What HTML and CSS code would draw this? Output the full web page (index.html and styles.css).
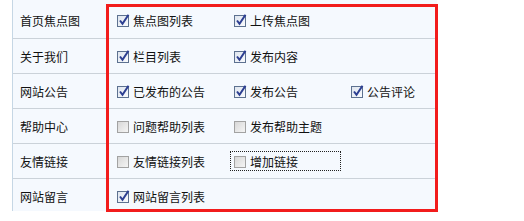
FILE: index.html
```html
<!DOCTYPE html>
<html>
<head>
<meta charset="utf-8">
<link rel="stylesheet" href="styles.css">
</head>
<body>
<svg class="defs" width="0" height="0">
  <defs>
    <linearGradient id="gc" x1="0" y1="0" x2="1" y2="1">
      <stop offset="0" stop-color="#dde4ee"/>
      <stop offset="1" stop-color="#fbfcfe"/>
    </linearGradient>
    <linearGradient id="gu" x1="0" y1="0" x2="1" y2="1">
      <stop offset="0" stop-color="#d6d6d6"/>
      <stop offset="1" stop-color="#f6f6f6"/>
    </linearGradient>
    <symbol id="on" viewBox="0 0 13 13">
      <rect x="0.5" y="1.5" width="11" height="11" fill="url(#gc)" stroke="#5d7190"/>
      <path d="M3 6.5 L5.5 9.8 L11.5 0.8" fill="none" stroke="#2d3f92" stroke-width="2"/>
    </symbol>
    <symbol id="off" viewBox="0 0 13 13">
      <rect x="0.5" y="1.5" width="11" height="11" fill="url(#gu)" stroke="#a2a2a2"/>
    </symbol>
  </defs>
</svg>
<div class="page">
  <div class="table">
    <div class="row first">
      <div class="label">首页焦点图</div>
      <div class="items">
        <span class="item"><svg class="cb"><use href="#on"/></svg>焦点图列表</span>
        <span class="item"><svg class="cb"><use href="#on"/></svg>上传焦点图</span>
      </div>
    </div>
    <div class="row">
      <div class="label">关于我们</div>
      <div class="items">
        <span class="item"><svg class="cb"><use href="#on"/></svg>栏目列表</span>
        <span class="item"><svg class="cb"><use href="#on"/></svg>发布内容</span>
      </div>
    </div>
    <div class="row">
      <div class="label">网站公告</div>
      <div class="items">
        <span class="item"><svg class="cb"><use href="#on"/></svg>已发布的公告</span>
        <span class="item"><svg class="cb"><use href="#on"/></svg>发布公告</span>
        <span class="item"><svg class="cb"><use href="#on"/></svg>公告评论</span>
      </div>
    </div>
    <div class="row">
      <div class="label">帮助中心</div>
      <div class="items">
        <span class="item"><svg class="cb"><use href="#off"/></svg>问题帮助列表</span>
        <span class="item"><svg class="cb"><use href="#off"/></svg>发布帮助主题</span>
      </div>
    </div>
    <div class="row">
      <div class="label">友情链接</div>
      <div class="items">
        <span class="item"><svg class="cb"><use href="#off"/></svg>友情链接列表</span>
        <span class="item focus"><svg class="cb"><use href="#off"/></svg>增加链接</span>
      </div>
    </div>
    <div class="row">
      <div class="label">网站留言</div>
      <div class="items">
        <span class="item"><svg class="cb"><use href="#on"/></svg>网站留言列表</span>
      </div>
    </div>
  </div>
  <div class="mark"></div>
</div>
</body>
</html>
```
FILE: styles.css
```css
html, body {
  margin: 0;
  padding: 0;
  background: #fff;
}
.defs {
  position: absolute;
  width: 0;
  height: 0;
}
.page {
  position: relative;
  width: 524px;
  height: 221px;
  padding-left: 12px;
  box-sizing: border-box;
  font-family: "Noto Sans CJK SC", "Noto Sans", sans-serif;
  font-size: 12px;
  color: #111;
}
.table {
  width: 424px;
  height: 211px;
  overflow: hidden;
  border-left: 1px solid #c6d7e5;
  background: #f5f9fe;
}
.row {
  display: flex;
  align-items: center;
  height: 34px;
  border-bottom: 1px solid #cbd2d9;
}
.row.first {
  height: 35px;
  padding-top: 3px;
}
.label {
  width: 100px;
  padding-left: 7px;
  box-sizing: border-box;
  flex: none;
}
.items {
  display: flex;
  align-items: center;
}
.item {
  display: flex;
  align-items: center;
  width: 111px;
  height: 20px;
  box-sizing: border-box;
  padding-left: 3px;
  margin-right: 6px;
  border: 1px solid transparent;
  white-space: nowrap;
}
.item.focus {
  border: 1px dotted #222;
}
.cb {
  width: 13px;
  height: 13px;
  margin-right: 3px;
  flex: none;
  overflow: visible;
}
.mark {
  position: absolute;
  left: 106px;
  top: 4px;
  width: 332px;
  height: 208px;
  box-sizing: border-box;
  border: 3px solid #f21c1c;
}
```
